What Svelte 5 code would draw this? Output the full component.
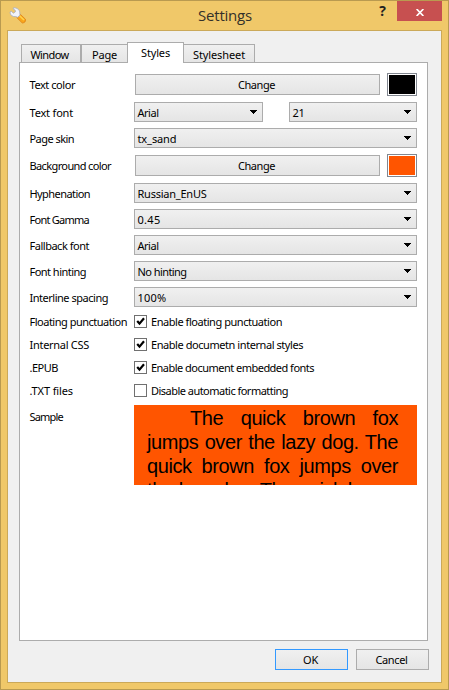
<script>
  const tabs = [
    { name: 'Window', size: 60, text: 38 },
    { name: 'Page', size: 47, text: 25 },
    { name: 'Styles', size: 57, text: 29, active: true },
    { name: 'Stylesheet', size: 71, text: 52 }
  ];
  const rows = [
    { label: 'Text color', w: 46, color: '#000000' },
    { label: 'Text font', w: 44, combos: [['Arial', 21, 129], ['21', 12, 128]] },
    { label: 'Page skin', w: 45, combos: [['tx_sand', 39, 283]] },
    { label: 'Background color', w: 82, color: '#ff5500' },
    { label: 'Hyphenation', w: 61, combos: [['Russian_EnUS', 69, 283]] },
    { label: 'Font Gamma', w: 60, combos: [['0.45', 23, 283]] },
    { label: 'Fallback font', w: 60, combos: [['Arial', 21, 283]] },
    { label: 'Font hinting', w: 57, combos: [['No hinting', 49, 283]] },
    { label: 'Interline spacing', w: 79, combos: [['100%', 29, 283]] },
    { label: 'Floating punctuation', w: 98, check: 'Enable floating punctuation', cw: 131, on: true },
    { label: 'Internal CSS', w: 60, check: 'Enable documetn internal styles', cw: 152, on: true },
    { label: '.EPUB', w: 29, check: 'Enable document embedded fonts', cw: 163, on: true },
    { label: '.TXT files', w: 44, check: 'Disable automatic formatting', cw: 137, on: false }
  ];
  const sample = [
    'The quick brown fox',
    'jumps over the lazy dog. The',
    'quick brown fox jumps over',
    'the lazy dog. The quick brown'
  ];

  // Tracks the text so that its advance width equals the given number of pixels.
  function fit(node, width) {
    const natural = node.getBoundingClientRect().width;
    node.style.letterSpacing = (width - natural) / node.textContent.length + 'px';
  }
</script>

<div class="window">
  <header>
    <svg class="wrench" width="18" height="18" viewBox="0 0 18 18">
      <path d="M8.3 8.2 10.5 6.5 16.5 12.3Q17 15.7 13.3 16L8 10.8Z" fill="#f9a51b" stroke="#d87910" stroke-width=".7" />
      <path d="M10 8.2 15 13" stroke="#ffd34d" stroke-width="1.5" />
      <path d="M4.5 .8C8 .5 11 2.8 10.8 6.2L11 8 8.6 10.3 6.7 9.6C3.5 10 1 8 1 5L2.2 4.2 4.4 6.2 6.5 4.7 6.2 3.2 4.2 2Z" fill="#f2f4fa" stroke="#a6adc0" stroke-width=".8" />
    </svg>
    <h1><span use:fit={54}>Settings</span></h1>
    <span class="help">?</span>
    <button class="close" aria-label="Close">
      <svg width="8" height="7" viewBox="0 0 8 7"><path d="M.6 0 7.4 7M7.4 0 .6 7" stroke="#fff" stroke-width="1.7" /></svg>
    </button>
  </header>

  <main>
    <nav>
      {#each tabs as tab}
        <div class="tab" class:active={tab.active} style:width="{tab.size}px"><span use:fit={tab.text}>{tab.name}</span></div>
      {/each}
    </nav>

    <section>
      {#each rows as row}
        <div class="row" class:tall={row.color} class:short={row.check} class:select={row.combos}>
          <div class="label"><span use:fit={row.w}>{row.label}</span></div>
          {#if row.color}
            <button class="push change"><span use:fit={37}>Change</span></button>
            <div class="swatch"><div style:background={row.color}></div></div>
          {:else if row.combos}
            <div class="combos">
              {#each row.combos as [value, w, size]}
                <div class="combo" style:width="{size}px">
                  <span use:fit={w}>{value}</span>
                  <svg width="7" height="4" viewBox="0 0 7 4" shape-rendering="crispEdges"><path d="M0 0H7V1H6V2H5V3H4V4H3V3H2V2H1V1H0Z" /></svg>
                </div>
              {/each}
            </div>
          {:else}
            <div class="box">
              {#if row.on}
                <svg width="11" height="11" viewBox="0 0 11 11"><path d="M2.2 5 4.5 7.6 9 2.2" fill="none" stroke="#000" stroke-width="2.2" /></svg>
              {/if}
            </div>
            <span use:fit={row.cw}>{row.check}</span>
          {/if}
        </div>
      {/each}
      <div class="row preview">
        <div class="label"><span use:fit={34}>Sample</span></div>
        <div class="sample">
          {#each sample as line}<p>{line}</p>{/each}
        </div>
      </div>
    </section>

    <footer>
      <button class="push default"><span use:fit={15}>OK</span></button>
      <button class="push"><span use:fit={32}>Cancel</span></button>
    </footer>
  </main>
</div>

<style>
  .window {
    box-sizing: border-box;
    width: 449px;
    height: 690px;
    display: flex;
    flex-direction: column;
    border: 1px solid #b99a50;
    padding: 0 6px 6px;
    background: #f0c869;
    color: #000;
    font: 11px/14px "Noto Sans", "Open Sans", sans-serif;
    white-space: nowrap;
    overflow: hidden;
  }
  header {
    height: 29px;
    flex: none;
    display: flex;
    align-items: flex-start;
  }
  .wrench { margin: 6px 0 0 2px; }
  h1 {
    flex: 1;
    margin: 4px 0 0 171px;
    font: 15px/20px "Open Sans", sans-serif;
    color: #33302a;
  }
  .help {
    width: 23px;
    margin-right: 3px;
    font: bold 14px/20px "Open Sans", sans-serif;
    color: #222;
    text-align: center;
  }
  button {
    box-sizing: border-box;
    display: flex;
    align-items: center;
    justify-content: center;
    padding: 0;
    font: inherit;
    color: inherit;
  }
  .close {
    width: 45px;
    height: 20px;
    border: 0;
    background: #c75050;
    padding-top: 2px;
  }
  main {
    flex: 1;
    display: flex;
    flex-direction: column;
    border: 1px solid #cba959;
    background: #f0f0f0;
    padding: 11px 13px 12px 11px;
  }
  nav {
    display: flex;
    align-items: flex-end;
    height: 20px;
    padding-left: 2px;
  }
  .tab {
    box-sizing: border-box;
    height: 18px;
    border: 1px solid #acacac;
    border-bottom: 0;
    background: linear-gradient(#f0f0f0, #e5e5e5);
    display: flex;
    align-items: center;
    justify-content: center;
    padding-top: 2px;
  }
  .tab:first-child { padding-right: 3px; }
  .tab.active {
    height: 21px;
    margin: 0 0 -1px -1px;
    background: #fff;
    position: relative;
    padding-top: 0;
  }
  .tab:last-child { border-left: 0; }
  section {
    box-sizing: border-box;
    height: 579px;
    width: 409px;
    border: 1px solid #acacac;
    background: #fff;
    padding: 10px 10px 0 9px;
    display: flex;
    flex-direction: column;
    gap: 6px;
  }
  .row {
    display: flex;
    align-items: center;
    height: 20px;
    flex: none;
  }
  .row.tall { height: 23px; }
  .row.short { height: 17px; }
  .label { width: 105px; flex: none; }
  .label span { padding-left: .5px; }
  .select .label { padding-top: 2px; }
  .push {
    width: 73px;
    height: 21px;
    border: 1px solid #acacac;
    padding-right: 2px;
    background: linear-gradient(#f0f0f0, #e5e5e5);
  }
  .push.default { border-color: #3399ff; }
  .push.change { width: 245px; margin: 0 7px 0 1px; padding-top: 1px; }
  .swatch {
    box-sizing: border-box;
    width: 30px;
    height: 23px;
    border: 1px solid #828790;
    padding: 1px;
    display: flex;
    background: #fff;
  }
  .swatch div { flex: 1; }
  .combos {
    display: flex;
    justify-content: space-between;
    width: 283px;
  }
  .combo {
    box-sizing: border-box;
    height: 20px;
    border: 1px solid #acacac;
    background: linear-gradient(#f0f0f0, #e5e5e5);
    display: flex;
    align-items: center;
    justify-content: space-between;
    padding: 1px 5px 0 2.5px;
  }
  .combo svg { margin-top: -2px; }
  .box {
    box-sizing: border-box;
    width: 13px;
    height: 13px;
    border: 1px solid #707070;
    background: #fff;
    margin-right: 4px;
  }
  .box svg { display: block; }
  .row.preview { height: 80px; align-items: flex-start; }
  .preview .label { padding-top: 5px; }
  .sample {
    box-sizing: border-box;
    width: 283px;
    height: 80px;
    padding: 1px 19px 0 13px;
    background: #ff5500;
    overflow: hidden;
    font: 20px/24px "Liberation Sans", Arial, sans-serif;
    letter-spacing: -.42px;
  }
  .sample p {
    margin: 0;
    text-align: justify;
    text-align-last: justify;
  }
  .sample p:first-child { padding-left: 43px; }
  footer {
    display: flex;
    justify-content: flex-end;
    gap: 8px;
    margin: 8px -1px 0 0;
  }
</style>
